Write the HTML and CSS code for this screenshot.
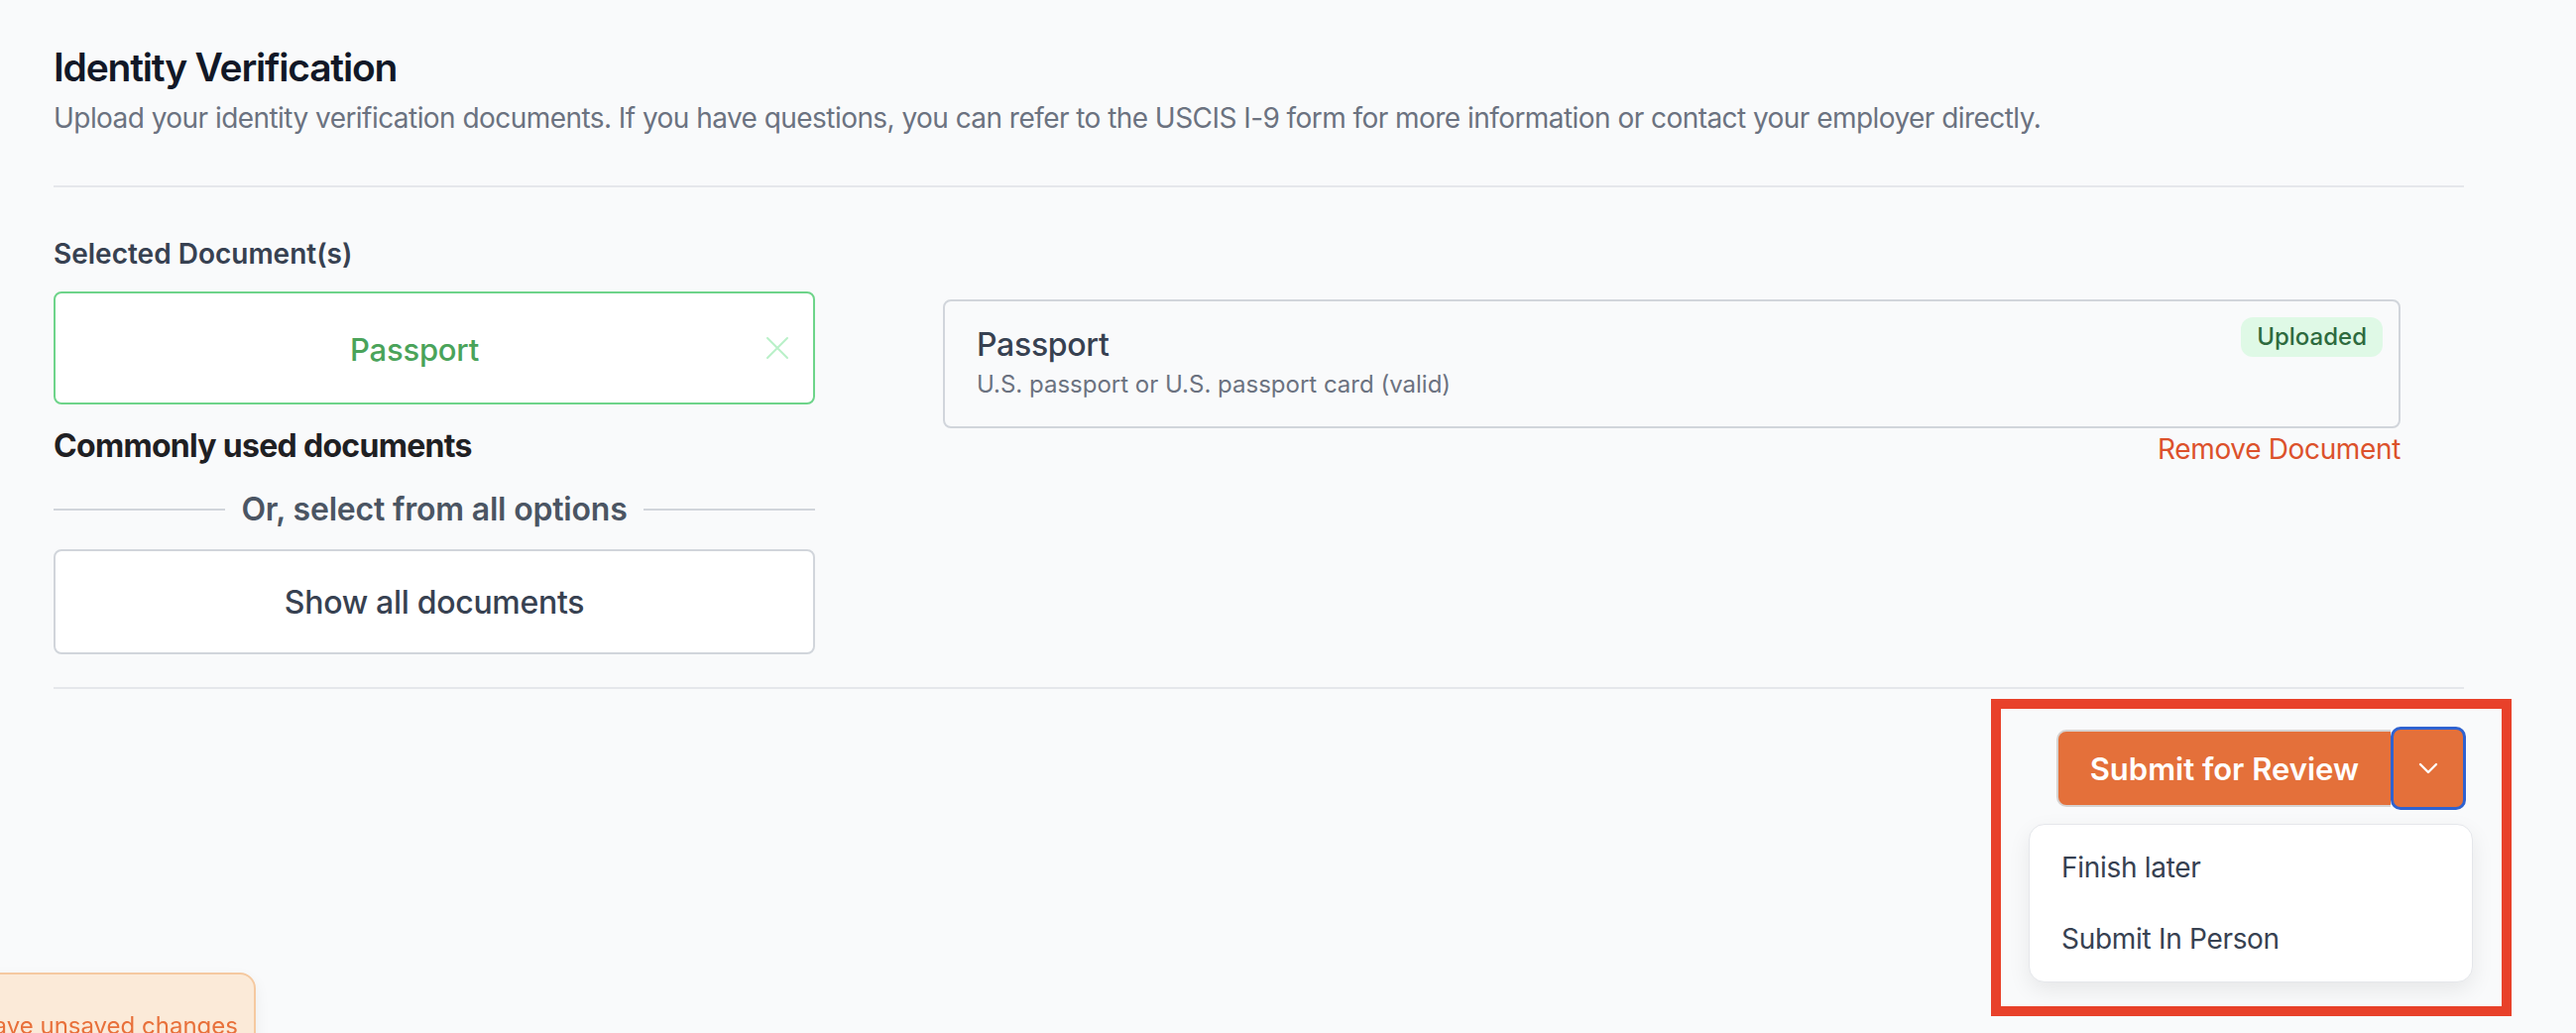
FILE: index.html
```html
<!DOCTYPE html>
<html lang="en">
<head>
    <meta charset="UTF-8">
    <meta name="viewport" content="width=device-width, initial-scale=1.0">
    <title>Identity Verification</title>
    <link rel="stylesheet" href="styles.css">
</head>
<body>
    <main class="page">
        <header class="page-head">
            <h1>Identity Verification</h1>
            <p class="intro">Upload your identity verification documents. If you have questions, you can refer to the USCIS I-9 form for more information or contact your employer directly.</p>
        </header>

        <section class="docs">
            <div class="picker">
                <div class="label">Selected Document(s)</div>
                <div class="chosen">
                    <span class="chosen-name">Passport</span>
                    <svg class="chosen-x" width="24" height="24" viewBox="0 0 24 24" fill="none" stroke="currentColor" stroke-width="2" stroke-linecap="round">
                        <path d="M2 2L22 22M22 2L2 22"/>
                    </svg>
                </div>
                <div class="common">Commonly used documents</div>
                <div class="or-line"><span>Or, select from all options</span></div>
                <button class="show-all">Show all documents</button>
            </div>

            <div class="uploads">
                <div class="doc-card">
                    <div class="doc-info">
                        <div class="doc-title">Passport</div>
                        <div class="doc-sub">U.S. passport or U.S. passport card (valid)</div>
                    </div>
                    <span class="badge">Uploaded</span>
                </div>
                <a class="remove" href="#">Remove Document</a>
            </div>
        </section>

        <footer class="actions">
            <div class="highlight">
                <div class="split">
                    <button class="submit">Submit for Review</button>
                    <button class="caret">
                        <svg width="20" height="12" viewBox="0 0 20 12" fill="none" stroke="currentColor" stroke-width="2.4" stroke-linecap="round" stroke-linejoin="round">
                            <path d="M2 2L10 10L18 2"/>
                        </svg>
                    </button>
                </div>
                <ul class="menu">
                    <li>Finish later</li>
                    <li>Submit In Person</li>
                </ul>
            </div>
        </footer>
    </main>

    <div class="toast">You have unsaved changes</div>
</body>
</html>
```

FILE: styles.css
```css
body {
    margin: 0;
    background-color: #f9fafb;
    font-family: Inter, "Noto Sans", sans-serif;
    color: #374151;
    overflow: hidden;
}
.page {
    width: 2431px;
    padding: 40px 0 0 54px;
}

/* header */
.page-head {
    padding-bottom: 48px;
    border-bottom: 2px solid #e5e7eb;
}
.page-head h1 {
    margin: 0;
    font-size: 39px;
    line-height: 56px;
    font-weight: 600;
    letter-spacing: -1.2px;
    color: #111827;
}
.intro {
    margin: 3px 0 0;
    font-size: 28px;
    line-height: 40px;
    letter-spacing: -0.55px;
    color: #6b7280;
}

/* documents */
.docs {
    display: grid;
    grid-template-columns: 768px 1470px;
    column-gap: 129px;
    padding: 47px 0 33px;
    border-bottom: 2px solid #e5e7eb;
}
.label {
    font-size: 28px;
    line-height: 40px;
    font-weight: 600;
    color: #374151;
}
.chosen {
    margin-top: 18px;
    height: 114px;
    box-sizing: border-box;
    display: flex;
    align-items: center;
    gap: 16px;
    padding: 0 24px;
    background-color: white;
    border: 2px solid #6ed48a;
    border-radius: 8px;
}
.chosen-name {
    flex: 1;
    text-align: center;
    font-size: 31px;
    line-height: 40px;
    font-weight: 500;
    letter-spacing: -0.2px;
    color: #4aa35a;
    padding-top: 3px;
}
.chosen-x {
    color: #b9f0c8;
}
.common {
    margin-top: 18px;
    font-size: 32px;
    line-height: 48px;
    font-weight: 700;
    letter-spacing: -0.7px;
    color: #1f2023;
}
.or-line {
    margin-top: 16px;
    display: flex;
    align-items: center;
    gap: 16px;
    font-size: 32px;
    line-height: 48px;
    font-weight: 600;
    letter-spacing: -0.2px;
    color: #4b5563;
}
.or-line::before,
.or-line::after {
    content: "";
    flex: 1;
    height: 2px;
    background-color: #d1d5db;
}
.show-all {
    display: block;
    width: 100%;
    margin-top: 16px;
    height: 106px;
    background-color: white;
    border: 2px solid #d1d5db;
    border-radius: 8px;
    font-family: inherit;
    font-size: 32px;
    font-weight: 500;
    letter-spacing: -0.3px;
    color: #374151;
}

.uploads {
    padding-top: 66px;
    display: flex;
    flex-direction: column;
    align-items: flex-end;
}
.doc-card {
    align-self: stretch;
    display: flex;
    justify-content: space-between;
    align-items: flex-start;
    padding: 16px 16px 16px 32px;
    border: 2px solid #d1d5db;
    border-radius: 8px;
}
.doc-info {
    padding: 4px 0 10px;
}
.doc-title {
    font-size: 32px;
    line-height: 48px;
    font-weight: 500;
    letter-spacing: -0.3px;
    color: #374151;
}
.doc-sub {
    font-size: 24px;
    line-height: 32px;
    color: #6b7280;
}
.badge {
    padding: 4px 16px;
    font-size: 24px;
    line-height: 32px;
    font-weight: 500;
    color: #2d6a3e;
    background-color: #dff9e6;
    border-radius: 12px;
}
.remove {
    margin-top: 1px;
    font-size: 28px;
    line-height: 40px;
    letter-spacing: -0.35px;
    color: #dc512b;
    text-decoration: none;
}

/* footer actions */
.actions {
    display: flex;
    justify-content: flex-end;
    margin-right: -48px;
    padding-top: 10px;
}
.highlight {
    display: flex;
    flex-direction: column;
    align-items: flex-end;
    padding: 18px 29px 24px 28px;
    border: 10px solid #e8412a;
}
.split {
    display: flex;
    align-items: center;
    margin-right: 7px;
}
.submit {
    height: 78px;
    padding: 0 32px;
    background-color: #e4703a;
    border: 2px solid #d6d3d1;
    border-right: none;
    border-radius: 10px 0 0 10px;
    font-family: inherit;
    font-size: 31px;
    font-weight: 600;
    color: white;
}
.caret {
    width: 76px;
    height: 84px;
    display: flex;
    align-items: center;
    justify-content: center;
    padding: 0;
    background-color: #e4703a;
    border: 3px solid #2f62d0;
    border-radius: 10px;
    color: white;
}
.menu {
    list-style: none;
    margin: 14px 0 0;
    width: 448px;
    box-sizing: border-box;
    padding: 7px 0;
    background-color: white;
    border: 1px solid #e5e7eb;
    border-radius: 16px;
    box-shadow: 0 8px 22px rgba(0, 0, 0, 0.08);
}
.menu li {
    padding: 16px 32px;
    font-size: 28px;
    line-height: 40px;
    letter-spacing: -0.3px;
    color: #374151;
}

/* toast */
.toast {
    position: fixed;
    top: 981px;
    right: calc(100% - 258px);
    padding: 36px 16px 36px 24px;
    font-size: 24px;
    line-height: 32px;
    white-space: nowrap;
    color: #e8703a;
    background-color: #fbead8;
    border: 2px solid #f5c9a0;
    border-radius: 16px;
    box-shadow: 0 6px 16px rgba(0, 0, 0, 0.06);
}
```
